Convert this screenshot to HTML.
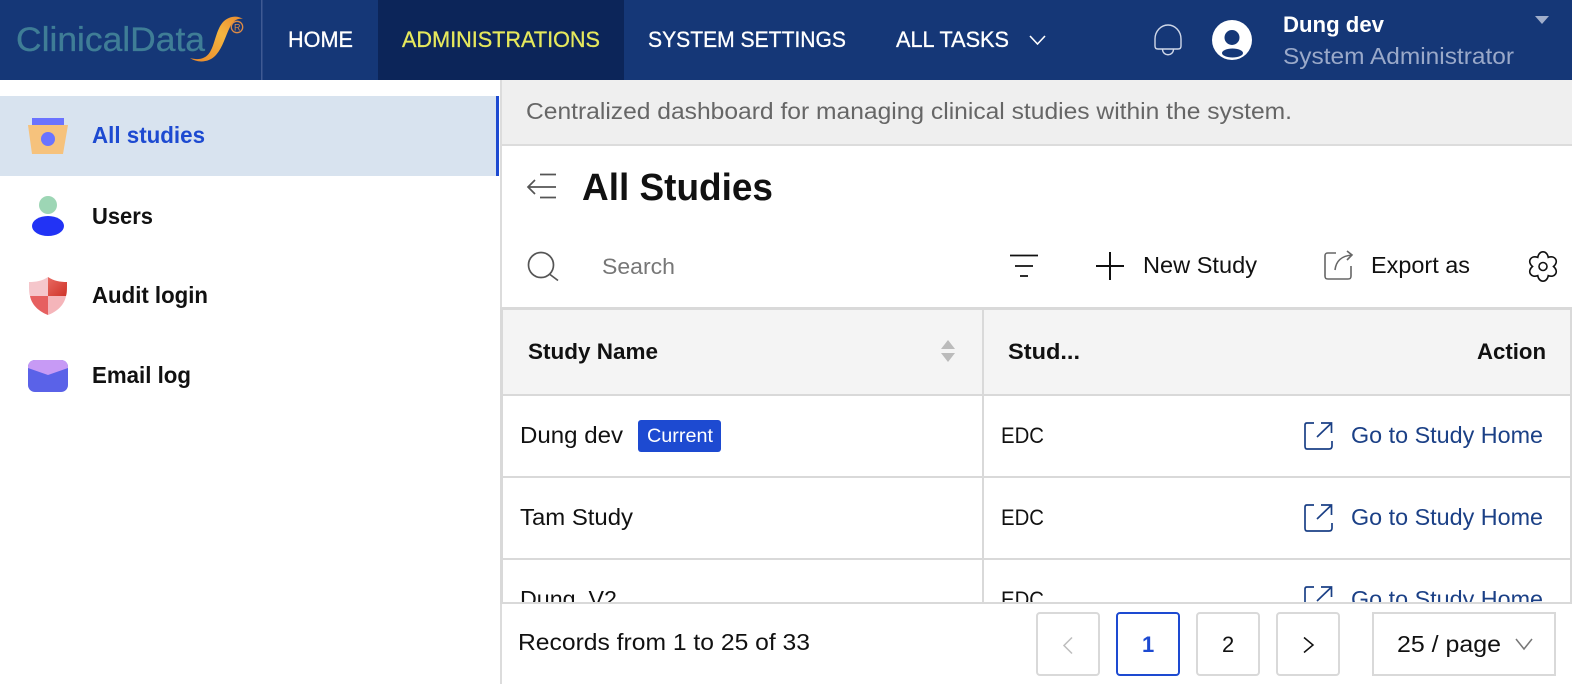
<!DOCTYPE html>
<html><head><meta charset="utf-8"><title>All Studies</title>
<style>
html,body{margin:0;padding:0;background:#fff;width:1572px;height:684px;overflow:hidden}
svg{display:block}
text{font-family:"Liberation Sans",sans-serif}
.b{font-weight:700}
</style></head><body>
<svg width="1572" height="684" viewBox="0 0 1572 684" xmlns="http://www.w3.org/2000/svg">
<defs>
<linearGradient id="s" x1="0" y1="1" x2="1" y2="0"><stop offset="0" stop-color="#e8872a"/><stop offset=".6" stop-color="#f4b540"/><stop offset="1" stop-color="#e98a2e"/></linearGradient>
<linearGradient id="q" x1="0" y1="0" x2="1" y2="1"><stop offset="0" stop-color="#e86a62"/><stop offset="1" stop-color="#cf3329"/></linearGradient>
<clipPath id="tb"><rect x="500" y="310" width="1072" height="292"/></clipPath>
</defs>

<!-- Top bar -->
<rect width="1572" height="80" fill="#153777"/>
<rect x="378" width="246" height="80" fill="#0c2559"/>
<rect x="261" width="1.5" height="80" fill="#3f5a93"/>
<text x="16" y="51" font-size="34" fill="#3f7d96" stroke="#3f7d96" stroke-width=".3" textLength="189" lengthAdjust="spacingAndGlyphs">ClinicalData</text>
<path d="M190 58C197 60 205 60 210 52C215 44 216 30 223 22C229 16 237 15 243 19C237 18 233 21 230 27C225 37 223 47 216 55C209 63 197 63 190 58Z" fill="url(#s)"/>
<circle cx="237" cy="27" r="5.700" fill="none" stroke="#dd8a45" stroke-width="1.300"/>
<text x="234" y="30.500" font-size="9" fill="#dd8a45">R</text>
<g font-size="22.500" fill="#fff" stroke="#fff" stroke-width=".3">
<text x="288" y="47" textLength="65" lengthAdjust="spacingAndGlyphs">HOME</text>
<text x="402" y="47" textLength="198" lengthAdjust="spacingAndGlyphs" fill="#e6e85c" stroke="#e6e85c">ADMINISTRATIONS</text>
<text x="648" y="47" textLength="198" lengthAdjust="spacingAndGlyphs">SYSTEM SETTINGS</text>
<text x="896" y="47" textLength="113" lengthAdjust="spacingAndGlyphs">ALL TASKS</text>
</g>
<path d="M1030 36L1037.500 44L1045 36" fill="none" stroke="#fff" stroke-width="1.600"/>
<path d="M1155 46V39A13 14 0 0 1 1181 39V46C1181 48 1180 49 1178 49H1158C1156 49 1155 48 1155 46Z" fill="none" stroke="#cfd7e8" stroke-width="1.400"/>
<path d="M1162.500 49.500C1163 56.500 1173 56.500 1173.500 49.500" fill="none" stroke="#cfd7e8" stroke-width="1.400"/>
<circle cx="1232" cy="40" r="20" fill="#fff"/>
<circle cx="1232" cy="37.500" r="7.500" fill="#153777"/>
<ellipse cx="1232.500" cy="53" rx="10.500" ry="4.500" fill="#153777"/>
<text class="b" x="1283" y="32" font-size="22.500" fill="#fff" textLength="101" lengthAdjust="spacingAndGlyphs">Dung dev</text>
<text x="1283" y="64" font-size="23.500" fill="#9aa9c9" textLength="231" lengthAdjust="spacingAndGlyphs">System Administrator</text>
<path d="M1535 16H1549L1542 24Z" fill="#a0aecb"/>

<!-- Sidebar -->
<rect x="500" y="80" width="2" height="604" fill="#dcdcdc"/>
<rect y="96" width="497" height="80" fill="#d8e3ef"/>
<rect x="496" y="96" width="3" height="80" fill="#1d4ad1"/>
<rect x="32" y="118" width="32" height="7" fill="#6b73ff"/>
<path d="M28 125H68L63 154H32Z" fill="#f6c27c"/>
<circle cx="48" cy="139" r="7" fill="#6b73ff"/>
<circle cx="48" cy="205" r="9" fill="#9dd6b5"/>
<ellipse cx="48" cy="226" rx="16" ry="10" fill="#2233f5"/>
<path d="M48 277C42 281 36 282 29 282C29 290 29 293 30 296H48Z" fill="#f5c6cb"/>
<path d="M48 277C54 281 60 282 67 282C67 290 67 293 66 296H48Z" fill="url(#q)"/>
<path d="M30 296H48V315C40 312 32 306 30 296Z" fill="#e66060"/>
<path d="M66 296H48V315C56 312 64 306 66 296Z" fill="#f5b5ba"/>
<rect x="28" y="360" width="40" height="32" rx="7" fill="#5a62e8"/>
<path d="M28 368V367C28 363 31 360 35 360H61C65 360 68 363 68 367V368L48 375Z" fill="#c79af5"/>
<g font-size="23" class="b" fill="#111">
<text x="92" y="143" fill="#1d4ad1" textLength="113" lengthAdjust="spacingAndGlyphs">All studies</text>
<text x="92" y="224" textLength="61" lengthAdjust="spacingAndGlyphs">Users</text>
<text x="92" y="303" textLength="116" lengthAdjust="spacingAndGlyphs">Audit login</text>
<text x="92" y="383" textLength="99" lengthAdjust="spacingAndGlyphs">Email log</text>
</g>

<!-- Banner -->
<rect x="502" y="80" width="1070" height="64" fill="#efefef"/>
<rect x="502" y="144" width="1070" height="2" fill="#dcdcdc"/>
<text x="526" y="119" font-size="23" fill="#666" textLength="766" lengthAdjust="spacingAndGlyphs">Centralized dashboard for managing clinical studies within the system.</text>

<!-- Title -->
<g fill="none" stroke="#555" stroke-width="1.700">
<path d="M540 174.500H556M528 187H556M540 197.500H556M535 180L528 187L535 194"/>
<circle cx="541" cy="265" r="12.500"/><path d="M550 274.500L558 280.500"/>
</g>
<text class="b" x="582" y="200" font-size="38" fill="#111" textLength="191" lengthAdjust="spacingAndGlyphs">All Studies</text>
<text x="602" y="274" font-size="22.500" fill="#777" textLength="73" lengthAdjust="spacingAndGlyphs">Search</text>

<!-- Toolbar -->
<g stroke="#111" fill="none" stroke-width="1.700">
<path d="M1010 255.500H1038M1015 266H1033M1020 276H1028"/>
<path d="M1096 266H1124M1110 252V280" stroke-width="2"/>
</g>
<text x="1143" y="273" font-size="23" fill="#111" textLength="114" lengthAdjust="spacingAndGlyphs">New Study</text>
<path d="M1336 253H1328C1325.500 253 1325 254 1325 256V276C1325 278.500 1326 279 1328 279H1348C1350.500 279 1351 278 1351 276V266M1335 270C1336 261 1341 256 1352 255M1347 251L1352 255L1347 260" fill="none" stroke="#666" stroke-width="1.600"/>
<text x="1371" y="273" font-size="23" fill="#111" textLength="99" lengthAdjust="spacingAndGlyphs">Export as</text>
<g fill="none" stroke="#111" stroke-width="1.600">
<circle cx="1543" cy="266.500" r="4"/>
<path d="M1537.750 257.410C1538.900 250 1547.100 250 1548.250 257.410C1555.200 254.700 1559.300 261.800 1553.500 266.500C1559.300 271.200 1555.200 278.300 1548.250 275.590C1547.100 283 1538.900 283 1537.750 275.590C1530.800 278.300 1526.700 271.200 1532.500 266.500C1526.700 261.800 1530.800 254.700 1537.750 257.410Z"/>
</g>

<!-- Table -->
<rect x="500" y="307" width="1072" height="3" fill="#d9d9d9"/>
<rect x="503" y="310" width="1067" height="84" fill="#f4f4f4"/>
<rect x="500" y="310" width="3" height="292" fill="#d9d9d9"/>
<rect x="1570" y="310" width="2" height="292" fill="#d9d9d9"/>
<rect x="982" y="310" width="2" height="292" fill="#d9d9d9"/>
<rect x="503" y="394" width="1067" height="2" fill="#d9d9d9"/>
<rect x="503" y="476" width="1067" height="2" fill="#d9d9d9"/>
<rect x="503" y="558" width="1067" height="2" fill="#d9d9d9"/>
<g class="b" font-size="22.500" fill="#111">
<text class="b" x="528" y="359" textLength="130" lengthAdjust="spacingAndGlyphs">Study Name</text>
<text class="b" x="1008" y="359" textLength="72" lengthAdjust="spacingAndGlyphs">Stud...</text>
<text class="b" x="1477" y="359" textLength="69" lengthAdjust="spacingAndGlyphs">Action</text>
</g>
<path d="M948 340L955 349H941ZM941 353H955L948 362Z" fill="#bbb"/>
<g clip-path="url(#tb)" font-size="23" fill="#111">
<text x="520" y="443" textLength="103" lengthAdjust="spacingAndGlyphs">Dung dev</text>
<rect x="638" y="420" width="83" height="32" rx="3" fill="#1d4ad1"/>
<text x="647" y="442" font-size="19" fill="#fff" textLength="66" lengthAdjust="spacingAndGlyphs">Current</text>
<text x="1001" y="443" font-size="22" textLength="43" lengthAdjust="spacingAndGlyphs">EDC</text>
<text x="520" y="525" textLength="113" lengthAdjust="spacingAndGlyphs">Tam Study</text>
<text x="1001" y="525" font-size="22" textLength="43" lengthAdjust="spacingAndGlyphs">EDC</text>
<text x="520" y="607" textLength="97" lengthAdjust="spacingAndGlyphs">Dung_V2</text>
<text x="1001" y="607" font-size="22" textLength="43" lengthAdjust="spacingAndGlyphs">EDC</text>
<g fill="#1b4086">
<text x="1351" y="443" textLength="192" lengthAdjust="spacingAndGlyphs">Go to Study Home</text>
<text x="1351" y="525" textLength="192" lengthAdjust="spacingAndGlyphs">Go to Study Home</text>
<text x="1351" y="607" textLength="192" lengthAdjust="spacingAndGlyphs">Go to Study Home</text>
</g>
<g fill="none" stroke="#1b4086" stroke-width="1.700">
<path d="M1314 423H1307C1305.500 423 1305 424 1305 425V446C1305 448 1305.500 449 1307 449H1329C1331 449 1332 448 1332 446V441M1317 437L1331 423.500M1321 423H1331.500V433"/>
<path d="M1314 505H1307C1305.500 505 1305 506 1305 507V528C1305 530 1305.500 531 1307 531H1329C1331 531 1332 530 1332 528V523M1317 519L1331 505.500M1321 505H1331.500V515"/>
<path d="M1314 587H1307C1305.500 587 1305 588 1305 589V610C1305 612 1305.500 613 1307 613H1329C1331 613 1332 612 1332 610V605M1317 601L1331 587.500M1321 587H1331.500V597"/>
</g>
</g>

<!-- Footer -->
<rect x="500" y="602" width="1072" height="2" fill="#d9d9d9"/>
<text x="518" y="650" font-size="23" fill="#111" textLength="292" lengthAdjust="spacingAndGlyphs">Records from 1 to 25 of 33</text>
<g fill="#fff" stroke="#d9d9d9" stroke-width="2">
<rect x="1037" y="613" width="62" height="62" rx="3"/>
<rect x="1117" y="613" width="62" height="62" rx="3" stroke="#1d4ad1"/>
<rect x="1197" y="613" width="62" height="62" rx="3"/>
<rect x="1277" y="613" width="62" height="62" rx="3"/>
<rect x="1373" y="613" width="182" height="62"/>
</g>
<path d="M1072 637.500L1064 645.500L1072 653.500" fill="none" stroke="#bdbdbd" stroke-width="1.500"/>
<path d="M1304 637.500L1313 645L1304 652.500" fill="none" stroke="#111" stroke-width="1.500"/>
<text class="b" x="1142" y="652" font-size="22" fill="#1d4ad1">1</text>
<text x="1222" y="652" font-size="22" fill="#111">2</text>
<text x="1397" y="652" font-size="23" fill="#111" textLength="104" lengthAdjust="spacingAndGlyphs">25 / page</text>
<path d="M1516 639L1524 649L1532 639" fill="none" stroke="#777" stroke-width="1.500"/>
</svg>
</body></html>
